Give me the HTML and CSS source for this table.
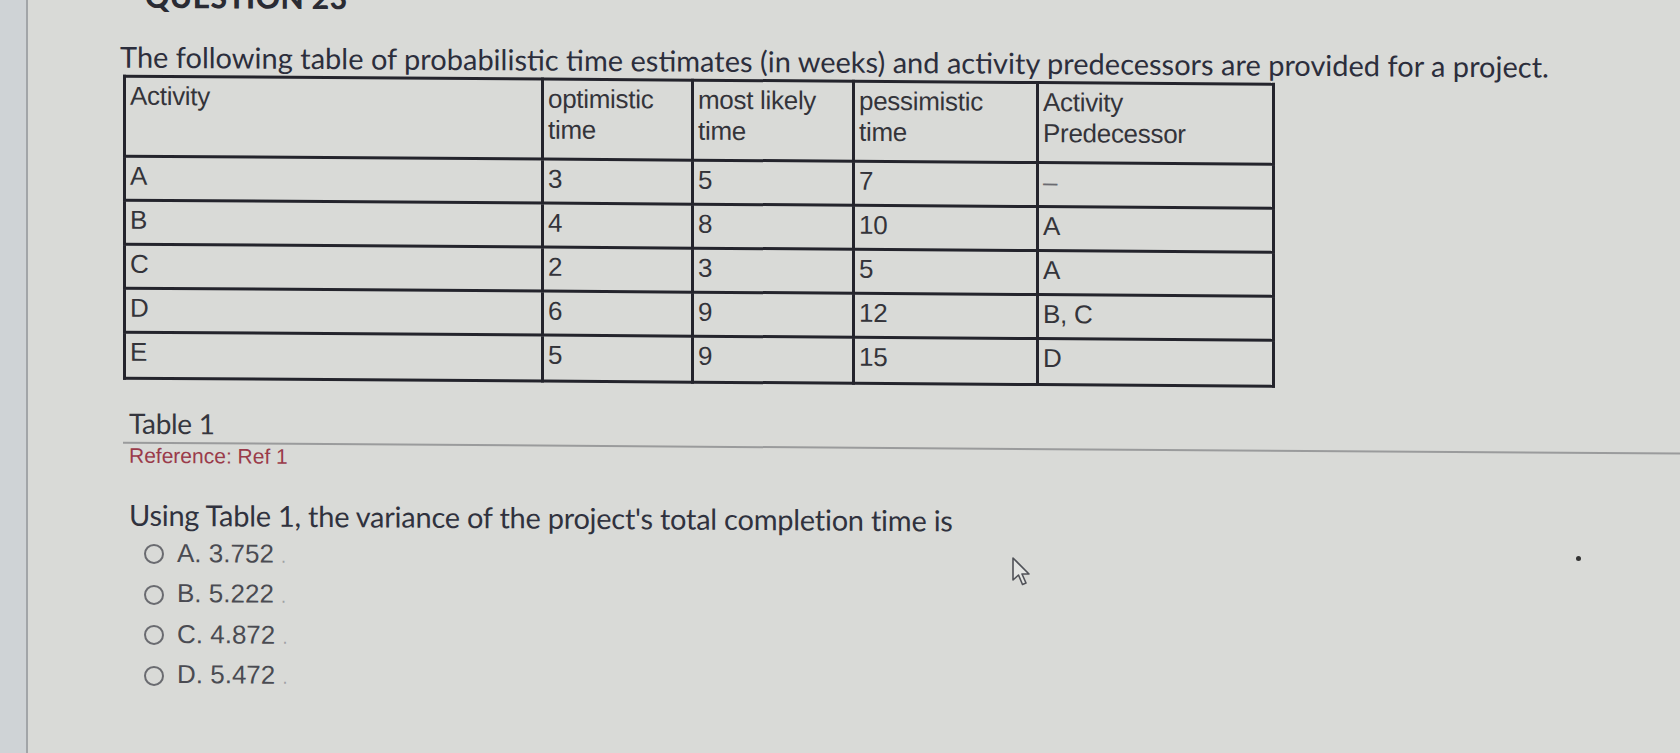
FILE: index.html
```html
<!DOCTYPE html>
<html lang="en">
<head>
<meta charset="utf-8">
<title>Question 23</title>
<link rel="stylesheet" href="styles.css">
</head>
<body>
<div class="page">
  <div class="rail"></div>
  <main class="content">
    <h2 class="qhead">QUESTION 23</h2>
    <p class="lead">The following table of probabilistic time estimates (in weeks) and activity predecessors are provided for a project.</p>
    <table class="est">
      <tr class="hrow">
        <td class="c1">Activity</td>
        <td class="c2">optimistic<br>time</td>
        <td class="c3">most likely<br>time</td>
        <td class="c4">pessimistic<br>time</td>
        <td class="c5">Activity<br>Predecessor</td>
      </tr>
      <tr><td>A</td><td>3</td><td>5</td><td>7</td><td class="dash">–</td></tr>
      <tr><td>B</td><td>4</td><td>8</td><td>10</td><td>A</td></tr>
      <tr><td>C</td><td>2</td><td>3</td><td>5</td><td>A</td></tr>
      <tr><td>D</td><td>6</td><td>9</td><td>12</td><td>B, C</td></tr>
      <tr class="last"><td>E</td><td>5</td><td>9</td><td>15</td><td>D</td></tr>
    </table>
    <div class="caption">Table 1</div>
    <div class="ref">Reference: Ref 1</div>
    <p class="prompt">Using Table 1, the variance of the project's total completion time is</p>
    <ul class="opts">
      <li><span class="radio"></span><span class="otext">A. 3.752 <span class="tail">.</span></span></li>
      <li><span class="radio"></span><span class="otext">B. 5.222 <span class="tail">.</span></span></li>
      <li><span class="radio"></span><span class="otext">C. 4.872 <span class="tail">.</span></span></li>
      <li><span class="radio"></span><span class="otext">D. 5.472 <span class="tail">.</span></span></li>
    </ul>
  </main>
  <svg class="cursor" width="21" height="31" viewBox="0 0 21 31">
    <path d="M2 2 L2 24 L7.5 19 L11.5 28.5 L15 27 L11 18 L18 18 Z" fill="#e4e5e3" stroke="#505258" stroke-width="1.6" stroke-linejoin="round"/>
  </svg>
  <span class="speck"></span>
</div>
</body>
</html>
```
FILE: styles.css
```css
html, body {
  margin: 0;
  padding: 0;
}
body {
  width: 1680px;
  height: 753px;
  overflow: hidden;
  background: #d9dad7;
}
.page {
  position: relative;
  display: flex;
  width: 1680px;
  height: 753px;
}
.rail {
  flex: 0 0 26px;
  background: #cfd3d6;
  border-right: 2px solid #a2a5a8;
}
.content {
  flex: 1;
  padding-left: 95px;
  transform: skewY(0.4deg);
  transform-origin: 0 0;
}
.qhead {
  margin: -20px 0 0 22px;
  font-family: Lato, "Open Sans", sans-serif;
  font-weight: 900;
  font-size: 30px;
  line-height: 30px;
  color: #2a2b33;
  letter-spacing: 0.5px;
}
.lead {
  margin: 29px 0 0 -3px;
  font-family: Lato, "Open Sans", sans-serif;
  font-size: 29px;
  line-height: 34px;
  color: #2c2e3c;
  letter-spacing: 0;
  white-space: nowrap;
}
.est {
  margin-top: 1px;
  border-collapse: collapse;
  font-family: "Liberation Sans", Arial, sans-serif;
  font-size: 26px;
  line-height: 31px;
  color: #34343a;
}
.est td {
  border: 3px solid #24242c;
  padding: 3px 4px 0 4px;
  vertical-align: top;
  height: 44px;
  box-sizing: border-box;
  letter-spacing: -0.3px;
}
.est .hrow td {
  height: 80px;
  padding-top: 3px;
}
.est .last td {
  height: 46px;
}
.c1 { width: 418px; }
.c2 { width: 150px; }
.c3 { width: 161px; }
.c4 { width: 184px; }
.c5 { width: 236px; }
.dash { color: #6a6a70; }
.caption {
  margin-top: 26px;
  padding: 0 0 2px 6px;
  border-bottom: 2px solid #9a9b9c;
  font-family: Lato, "Open Sans", sans-serif;
  font-size: 28px;
  line-height: 34px;
  color: #35363e;
  letter-spacing: -0.3px;
}
.ref {
  padding-left: 6px;
  font-family: "Liberation Sans", Arial, sans-serif;
  font-size: 21px;
  line-height: 24px;
  color: #9a3b4a;
}
.prompt {
  margin: 32px 0 0 6px;
  font-family: Lato, "Open Sans", sans-serif;
  font-size: 29px;
  line-height: 30px;
  color: #30323e;
  letter-spacing: -0.25px;
}
.opts {
  list-style: none;
  margin: 4px 0 0 0;
  padding: 0 0 0 21px;
}
.opts li {
  display: flex;
  align-items: center;
  gap: 13px;
  height: 40.5px;
}
.radio {
  width: 20px;
  height: 20px;
  box-sizing: border-box;
  border: 2px solid #6a6b70;
  border-radius: 50%;
}
.otext {
  font-family: "Liberation Sans", Arial, sans-serif;
  font-size: 26px;
  line-height: 28px;
  color: #4a4b52;
  letter-spacing: 0;
}
.tail {
  color: #9fa0a3;
  font-size: 18px;
}
.cursor {
  position: absolute;
  left: 1011px;
  top: 556px;
}
.speck {
  position: absolute;
  left: 1576px;
  top: 556px;
  width: 5px;
  height: 5px;
  border-radius: 50%;
  background: #333;
}
```
